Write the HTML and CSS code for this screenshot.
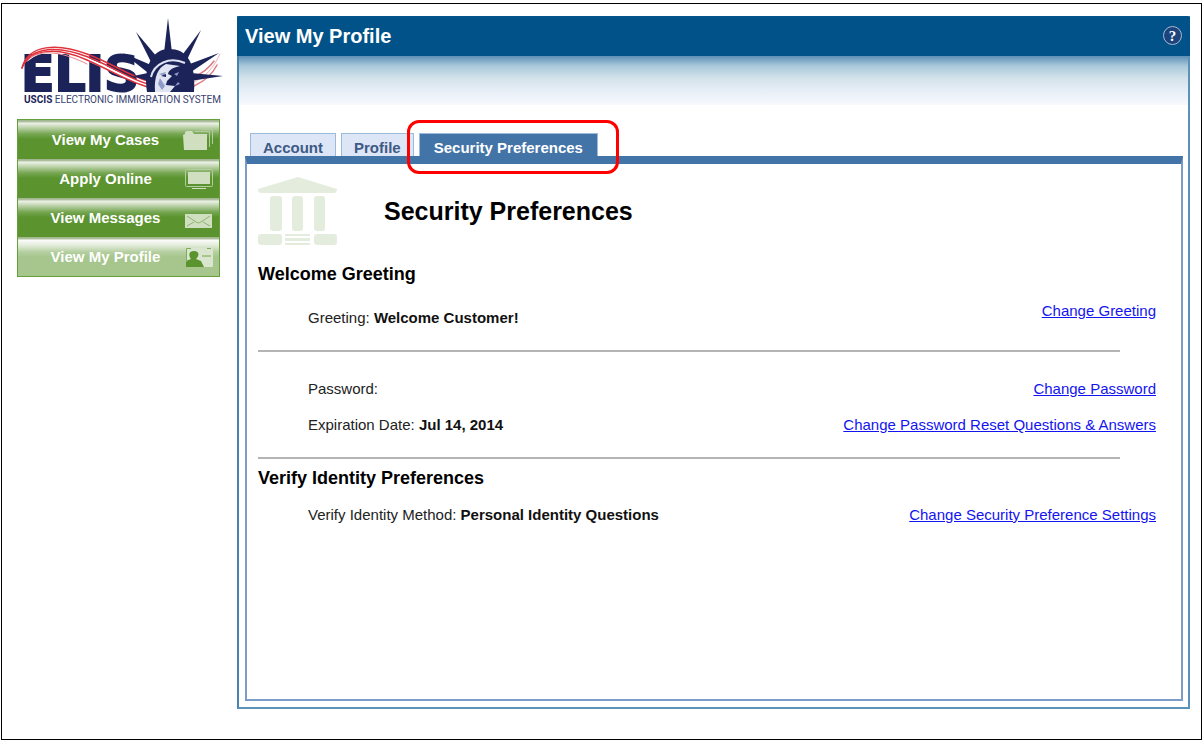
FILE: index.html
```html
<!DOCTYPE html>
<html lang="en">
<head>
    <meta charset="UTF-8">
    <meta name="viewport" content="width=device-width, initial-scale=1.0">
    <title>View My Profile</title>

    <link rel="stylesheet" href="styles.css">
</head>
<body>

    <div class="page">

        <div class="sidebar">
            <svg class="logo" width="206" height="92" viewBox="0 0 206 92" role="img" aria-label="ELIS">
                <text class="logo-name" x="4" y="75">ELIS</text>
                <!-- stripes -->
                <g fill="none" stroke-linecap="round">
                    <path d="M10 44C24 31 46 33 72 44S112 64 133 70" stroke="#fff" stroke-width="3"/>
                    <path d="M5 52C11 28 41 27 70 38S112 60 131 65" stroke="#e0323c" stroke-width="1.500"/>
                    <path d="M5 52C14 29 43 30 71 41S112 63 131 68" stroke="#e0323c" stroke-width="1.500"/>
                    <path d="M7 47C20 31 45 33 70 44S112 66 131 71" stroke="#e0323c" stroke-width="1.500"/>
                    <path d="M14 41C28 33 48 37 70 48" stroke="#e88a90" stroke-width="1"/>
                    <path d="M177 66C188 61 196 53 203 38" stroke="#efb4b8" stroke-width="1"/>
                    <path d="M177 61C186 57 192 52 197 45M177 70C188 65 196 57 200 49" stroke="#e07a80" stroke-width="1.500"/>
                </g>
                <!-- crown -->
                <g fill="#1b2359">
                    <path d="M151 2L155 37H147ZM119 16L140 41 134 46ZM184 14L169 46 163 42ZM106 37L134 49 130 56ZM202 37L174 56 170 49ZM116 60L131 57 131 65ZM206 60L173 65 174 57Z"/>
                    <path d="M130 76C126 51 135 33 152 33C169 33 179 45 177 76Z"/>
                </g>
                <!-- face -->
                <path d="M134 61C137 48 152 40 168 47" fill="none" stroke="#dfe3f2" stroke-width="2"/>
                <path d="M138 76C137 60 141 52 149 48L163 50C155 52 152 54 151 58L155 60 150 65 149 69 158 70 153 76Z" fill="#dfe3f2"/>
                <path d="M142 58L149 56 147 60ZM143 62L148 70 145 74 141 68Z" fill="#8f9bc9"/>
                <path d="M144 60L149 58 149 61ZM148 68L154 67 155 69Z" fill="#1b2359"/>
                <path d="M157 58L162 56 160 60ZM158 70L161 66 163 68Z" fill="#8f9bc9"/>
                <text class="logo-caption" x="7" y="87"><tspan class="logo-strong">USCIS</tspan> ELECTRONIC IMMIGRATION SYSTEM</text>
            </svg>

            <ul class="nav">
                <li>
                    <a href="#"><span>View My Cases</span>
                        <svg width="30" height="22" viewBox="0 0 30 22">
                            <path d="M0 6L2 5V3L4 2H9L11 5H24V21H1Z" fill="#cfdfc0"/>
                            <path d="M12 2.500H26.500V18M18 .5H29.500V15" fill="none" stroke="#b4cd9e"/>
                        </svg>
                    </a>
                </li>
                <li>
                    <a href="#"><span>Apply Online</span>
                        <svg width="30" height="22" viewBox="0 0 30 22">
                            <rect x="2.500" y="1.500" width="27" height="17" rx="1" fill="none" stroke="#b4cd9e"/>
                            <rect x="5" y="4" width="22" height="12" fill="#cfdfc0"/>
                            <path d="M9 20H23V21H9Z" fill="#cfdfc0"/>
                        </svg>
                    </a>
                </li>
                <li>
                    <a href="#"><span>View Messages</span>
                        <svg width="30" height="22" viewBox="0 0 30 22">
                            <path d="M2 7H29V21H2Z" fill="#cfdfc0"/>
                            <path d="M4 9L13 15Q15.500 17 18 15L27 9M4 19L11 15M27 19L20 15" fill="none" stroke="#8fb570"/>
                        </svg>
                    </a>
                </li>
                <li class="current">
                    <a href="#"><span>View My Profile</span>
                        <svg width="30" height="22" viewBox="0 0 30 22">
                            <rect x="3" y="2" width="27" height="19" rx="1" fill="#d9e6cd"/>
                            <path d="M3 21V15L8 13C5 9 6 5 11 5C16 5 17 9 13 13L18 15L21 21Z" fill="#5b942f"/>
                            <path d="M3.500 16V2.500H8M24 2.500H28" fill="none" stroke="#7fab5c"/>
                            <path d="M19 10H28" stroke="#a6c68d" stroke-width="2"/>
                        </svg>
                    </a>
                </li>
            </ul>
        </div>

        <div class="panel">
            <div class="panel-header">
                <h1>View My Profile</h1>
                <button class="help" type="button" aria-label="Help">?</button>
            </div>
            <div class="shade"></div>

            <div class="tabs">
                <a href="#">Account</a>
                <a href="#">Profile</a>
                <a href="#" class="selected">Security Preferences</a>
            </div>

            <div class="content">
                <div class="title">
                    <svg width="79" height="70" viewBox="0 0 79 70" fill="#e4eddd">
                        <path d="M40 1L79 13Q79 17 76 17H3Q0 17 0 13Z"/>
                        <rect x="12" y="20" width="12" height="35" rx="3"/>
                        <rect x="34" y="20" width="11" height="35" rx="3"/>
                        <rect x="56" y="20" width="11" height="35" rx="3"/>
                        <rect x="0" y="58" width="24" height="11" rx="3"/>
                        <rect x="56" y="58" width="23" height="11" rx="3"/>
                        <path d="M27 58H52V60H27ZM27 62H52V65H27ZM27 67H52V69H27Z"/>
                    </svg>
                    <h2>Security Preferences</h2>
                </div>

                <h3>Welcome Greeting</h3>
                <div class="row greeting">
                    <p>Greeting: <b>Welcome Customer!</b></p>
                    <a href="#">Change Greeting</a>
                </div>

                <hr>

                <div class="rows">
                    <div class="row">
                        <p>Password:</p>
                        <a href="#">Change Password</a>
                    </div>
                    <div class="row">
                        <p>Expiration Date: <b>Jul 14, 2014</b></p>
                        <a href="#">Change Password Reset Questions &amp; Answers</a>
                    </div>
                </div>

                <hr>

                <h3 class="verify">Verify Identity Preferences</h3>
                <div class="row">
                    <p>Verify Identity Method: <b>Personal Identity Questions</b></p>
                    <a href="#">Change Security Preference Settings</a>
                </div>
            </div>
        </div>

    </div>

</body>
</html>
```
FILE: styles.css
```css
*{
    box-sizing: border-box;
}

body{
    margin: 0;
    padding: 3px 0px 1px 1px;
    font-family: "Liberation Sans", Arial, sans-serif;
    font-size: 15px;
    line-height: 20px;
    color: #222;
    background-color: white;
}

h1, h2, h3, p, ul{
    margin: 0;
    padding: 0;
}

.page{
    display: flex;
    gap: 17px;
    min-height: calc(100vh - 4px);
    padding: 12px 11px 30px 15px;
    border: 1px solid black;
}

/* left column */
.sidebar{
    flex: none;
    width: 203px;
}

.logo{
    display: block;
    margin-bottom: 11px;
    overflow: visible;
}

.logo-name{
    font-family: "DejaVu Sans", sans-serif;
    font-size: 49px;
    font-weight: bold;
    fill: #1b2359;
    stroke: #1b2359;
    stroke-width: 2px;
}

.logo-caption{
    font-family: Roboto, sans-serif;
    font-size: 10px;
    fill: #3b4272;
}

.logo-strong{
    font-weight: bold;
    fill: #1b2359;
}

.nav{
    list-style: none;
    border: 1px solid #66a03a;
}

.nav a{
    display: flex;
    align-items: center;
    height: 39px;
    padding: 0px 6px 0px 10px;
    color: white;
    font-size: 15px;
    font-weight: bold;
    text-align: center;
    text-decoration: none;
    background: linear-gradient(#9db388 0px, #b3c3a5 2px, #eef3ea 3px, #b9d0a5 8px, #76a652 14px, #5b942f 19px);
}

.nav span{
    flex: 1;
}

.nav .current a{
    background: linear-gradient(#9db388 0px, #b3c3a5 2px, #fbfcfa 3px, #dfead6 9px, #b5cfa0 15px, #a6c68d 20px);
}

/* main panel */
.panel{
    flex: 1;
    display: flex;
    flex-direction: column;
    border: 2px solid #5b93b8;
    border-left-color: #4784ae;
    border-top: 1px solid #00568a;
}

.panel-header{
    display: flex;
    justify-content: space-between;
    align-items: center;
    height: 39px;
    margin: 0px -2px;
    padding: 0px 8px 2px;
    color: white;
    background-color: #005288;
}

h1{
    font-size: 20px;
}

.help{
    width: 19px;
    height: 19px;
    padding: 0;
    border: 1px solid #a9bad2;
    border-radius: 50%;
    color: white;
    background-color: #1d437c;
    font: bold 15px/16px "Liberation Serif", serif;
}

.shade{
    height: 49px;
    background: linear-gradient(#5d8fb6, #a9c8da 20%, #d3e2eb 45%, #eaf0f8 75%, #f7f9fd);
}

.tabs{
    display: flex;
    gap: 5px;
    margin: 28px 6px 0px;
    padding-left: 5px;
}

.tabs a{
    position: relative;
    height: 23px;
    padding: 4px 12px 0px;
    border: 1px solid #9bbbdc;
    border-bottom: none;
    color: #3e5a85;
    font-size: 15px;
    font-weight: bold;
    text-decoration: none;
    background-color: #dce6f7;
}

.tabs .selected{
    padding: 4px 14px 0px;
    color: white;
    background-color: #4274a8;
}

/* red ring round the selected tab */
.tabs .selected::after{
    content: "";
    position: absolute;
    inset: -14px -22px -18px -13px;
    border: 3px solid red;
    border-radius: 12px;
}

.content{
    flex: 1;
    margin: 0px 5px 6px 6px;
    padding: 12px 25px 12px 11px;
    border: 2px solid #7b9ec8;
    border-top: 8px solid #4274a8;
}

.title{
    display: flex;
    align-items: center;
    gap: 47px;
}

h2{
    color: black;
    font-size: 25px;
    line-height: 28px;
}

h3{
    margin: 16px 0px 15px;
    color: black;
    font-size: 18px;
    line-height: 24px;
}

.verify{
    margin-top: 7px;
}

.row{
    display: flex;
    justify-content: space-between;
    padding-left: 50px;
}

.row b{
    color: #111;
}

.row a{
    color: #1414f0;
}

.greeting p{
    padding-top: 7px;
}

.rows{
    display: grid;
    gap: 16px;
    margin-top: 27px;
}

hr{
    width: 96%;
    height: 2px;
    margin: 22px 0px 0px;
    border: none;
    background-color: #b4b4b4;
}
```
